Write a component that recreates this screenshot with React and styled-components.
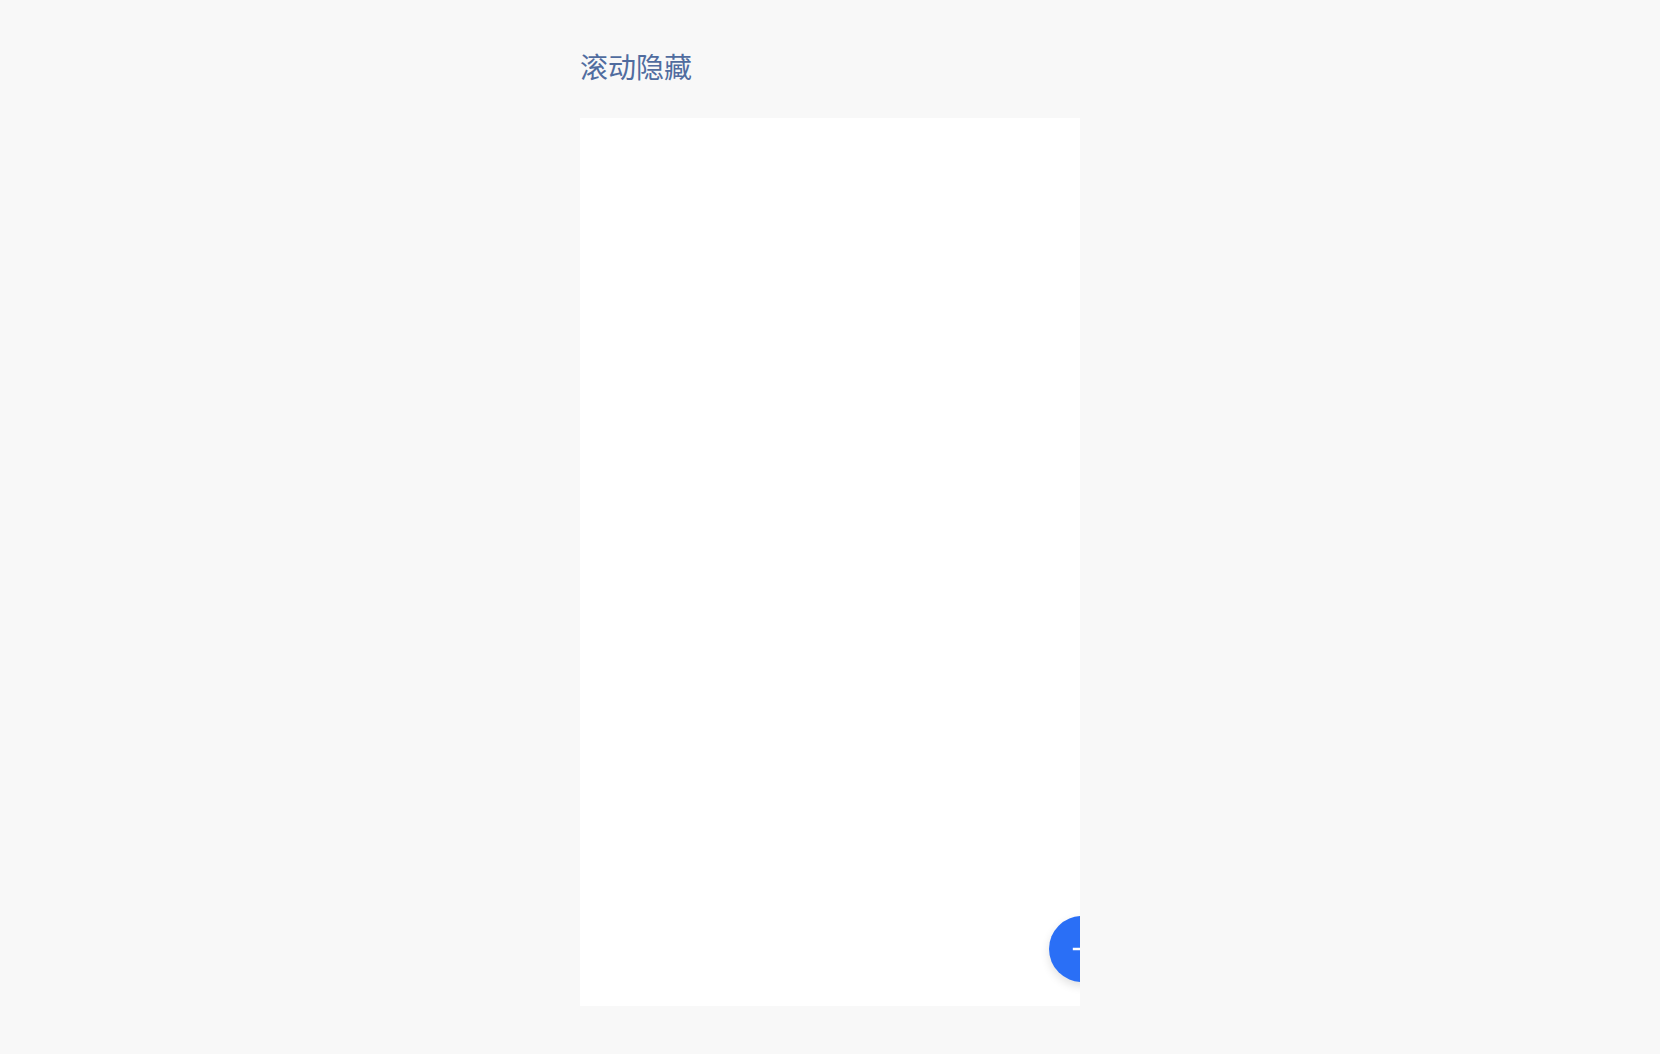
import React from "react";
import styled, { createGlobalStyle } from "styled-components";

const Global = createGlobalStyle`
  html, body { margin: 0; padding: 0; background: #f8f8f8; }
  body { font-family: "Noto Sans CJK SC", "Noto Sans", sans-serif; }
`;

const Page = styled.div`
  display: flex;
  justify-content: center;
  min-height: 1054px;
`;

const Column = styled.div`
  width: 500px;
  display: flex;
  flex-direction: column;
`;

const Title = styled.h1`
  margin: 0;
  padding: 51px 0 37px 0;
  font-size: 28px;
  line-height: 30px;
  font-weight: 400;
  color: #506c9f;
`;

const Panel = styled.div`
  position: relative;
  height: 888px;
  flex-shrink: 0;
  background: #ffffff;
  overflow: hidden;
`;

const Fab = styled.button`
  position: absolute;
  right: -35px;
  bottom: 24px;
  width: 66px;
  height: 66px;
  border: none;
  border-radius: 50%;
  background: #2a6ff6;
  box-shadow: 0 4px 10px rgba(0, 0, 0, 0.12);
  display: flex;
  align-items: center;
  justify-content: center;
  padding: 0;
  cursor: pointer;
`;

export default function App() {
  return (
    <>
      <Global />
      <Page>
        <Column>
          <Title>滚动隐藏</Title>
          <Panel>
            <Fab aria-label="add">
              <svg width="20" height="20" viewBox="0 0 20 20">
                <path d="M10 2v16M2 10h16" stroke="#fff" strokeWidth="2.4" strokeLinecap="square" />
              </svg>
            </Fab>
          </Panel>
        </Column>
      </Page>
    </>
  );
}
